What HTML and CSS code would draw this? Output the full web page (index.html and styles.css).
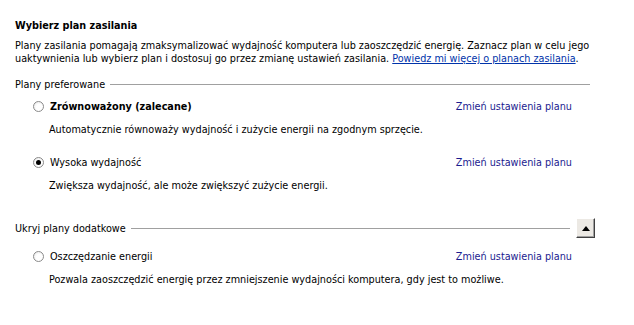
FILE: index.html
```html
<!DOCTYPE html>
<html lang="pl">

<head>
    <meta charset="UTF-8">
    <title>Opcje zasilania</title>
    <link rel="stylesheet" href="styles.css">
</head>

<body>
    <div class="panel">
        <h2 class="title">Wybierz plan zasilania</h2>
        <p class="intro">Plany zasilania pomagają zmaksymalizować wydajność komputera lub zaoszczędzić energię. Zaznacz plan w celu jego
            uaktywnienia lub wybierz plan i dostosuj go przez zmianę ustawień zasilania. <a href="#" class="more">Powiedz mi więcej o planach zasilania</a>.</p>

        <div class="group-head">
            <span class="group-label">Plany preferowane</span>
            <span class="group-line"></span>
        </div>

        <div class="plan">
            <div class="plan-row">
                <span class="radio"></span>
                <span class="plan-name bold">Zrównoważony (zalecane)</span>
                <a href="#" class="change">Zmień ustawienia planu</a>
            </div>
            <div class="plan-desc">Automatycznie równoważy wydajność i zużycie energii na zgodnym sprzęcie.</div>
        </div>

        <div class="plan">
            <div class="plan-row">
                <span class="radio checked"></span>
                <span class="plan-name">Wysoka wydajność</span>
                <a href="#" class="change">Zmień ustawienia planu</a>
            </div>
            <div class="plan-desc">Zwiększa wydajność, ale może zwiększyć zużycie energii.</div>
        </div>

        <div class="group-head extra">
            <span class="group-label">Ukryj plany dodatkowe</span>
            <span class="group-line"></span>
            <button class="collapse" type="button"><span class="arrow"></span></button>
        </div>

        <div class="plan">
            <div class="plan-row">
                <span class="radio"></span>
                <span class="plan-name">Oszczędzanie energii</span>
                <a href="#" class="change">Zmień ustawienia planu</a>
            </div>
            <div class="plan-desc">Pozwala zaoszczędzić energię przez zmniejszenie wydajności komputera, gdy jest to możliwe.</div>
        </div>
    </div>
</body>

</html>
```

FILE: styles.css
```css
body {
    margin: 0;
    padding: 0;
    background: #fff;
    font-family: "DejaVu Sans Condensed", "DejaVu Sans", sans-serif;
    font-size: 10.75px;
    color: #000;
}

.panel {
    width: 575px;
    padding: 19px 0 0 15px;
}

.title {
    margin: 0;
    font-size: 10.75px;
    font-weight: bold;
    line-height: 14px;
}

.intro {
    margin: 6px 0 0;
    line-height: 13px;
}

.more {
    color: #0033aa;
}

.group-head {
    display: flex;
    align-items: center;
    height: 14px;
    margin-top: 12px;
}

.group-label {
    padding-right: 5px;
}

.group-line {
    flex: 1;
    border-top: 1px solid #a0a0a0;
}

.group-head.extra {
    margin-top: 28px;
    margin-bottom: 5px;
}

.collapse {
    width: 19px;
    height: 20px;
    margin-left: 6px;
    margin-right: -5px;
    padding: 0;
    background: #ece9e4;
    border: 1px solid;
    border-color: #fff #404040 #404040 #fff;
    box-shadow: inset -1px -1px 0 #a0a0a0;
    display: flex;
    align-items: center;
    justify-content: center;
}

.arrow {
    width: 0;
    height: 0;
    border-left: 4px solid transparent;
    border-right: 4px solid transparent;
    border-bottom: 5px solid #000;
}

.plan {
    padding: 8px 0 0 18px;
}

.plan + .plan {
    padding-top: 18px;
}

.group-head + .plan {
    padding-top: 9px;
}

.group-head:first-of-type + .plan {
    padding-top: 8px;
}

.plan-row {
    display: flex;
    align-items: center;
    height: 14px;
}

.radio {
    width: 9px;
    height: 9px;
    border: 1px solid #8a8a8a;
    border-radius: 50%;
    background: radial-gradient(circle at 60% 60%, #fff 40%, #e2e2e2 100%);
    margin-right: 6px;
    position: relative;
}

.radio.checked::after {
    content: "";
    position: absolute;
    left: 2px;
    top: 2px;
    width: 5px;
    height: 5px;
    border-radius: 50%;
    background: #000;
}

.plan-name.bold {
    font-weight: bold;
}

.change {
    margin-left: auto;
    margin-right: 18px;
    color: #1b1b8f;
    text-decoration: none;
}

.plan-desc {
    margin-top: 10px;
    padding-left: 16px;
    line-height: 14px;
}
```
